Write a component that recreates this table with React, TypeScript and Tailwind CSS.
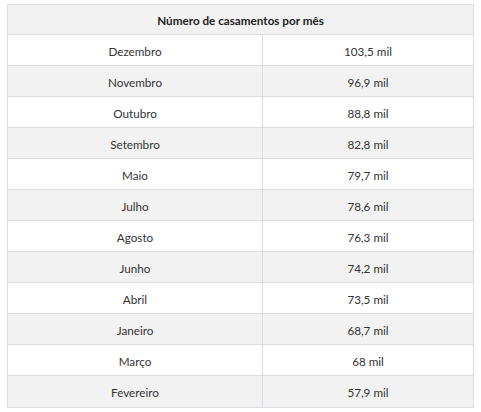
import React from "react";

const rows: [string, string][] = [
  ["Dezembro", "103,5 mil"],
  ["Novembro", "96,9 mil"],
  ["Outubro", "88,8 mil"],
  ["Setembro", "82,8 mil"],
  ["Maio", "79,7 mil"],
  ["Julho", "78,6 mil"],
  ["Agosto", "76,3 mil"],
  ["Junho", "74,2 mil"],
  ["Abril", "73,5 mil"],
  ["Janeiro", "68,7 mil"],
  ["Março", "68 mil"],
  ["Fevereiro", "57,9 mil"],
];

export default function App() {
  return (
    <div className="bg-white w-[481px] h-[412px] pt-[4px] pl-[7px]" style={{ fontFamily: "Lato, 'Noto Sans', sans-serif" }}>
      <div className="w-[467px] border border-[#dcdde3] text-[11.7px] leading-[15px] text-[#333333]">
        <div className="h-[30px] pt-[1px] flex items-center justify-center font-bold bg-[#f2f2f2] border-b border-[#dcdde3] text-[#222222]">
          Número de casamentos por mês
        </div>
        {rows.map(([m, v], i) => (
          <div
            key={m}
            className={`grid grid-cols-[255px_1fr] h-[31px] ${i < rows.length - 1 ? "border-b" : ""} border-[#dcdde3] ${i % 2 === 1 ? "bg-[#f2f2f2]" : "bg-white"}`}
          >
            <div className="flex items-center justify-center pt-[2px] border-r border-[#dcdde3]">{m}</div>
            <div className="flex items-center justify-center pt-[2px]">{v}</div>
          </div>
        ))}
      </div>
    </div>
  );
}
